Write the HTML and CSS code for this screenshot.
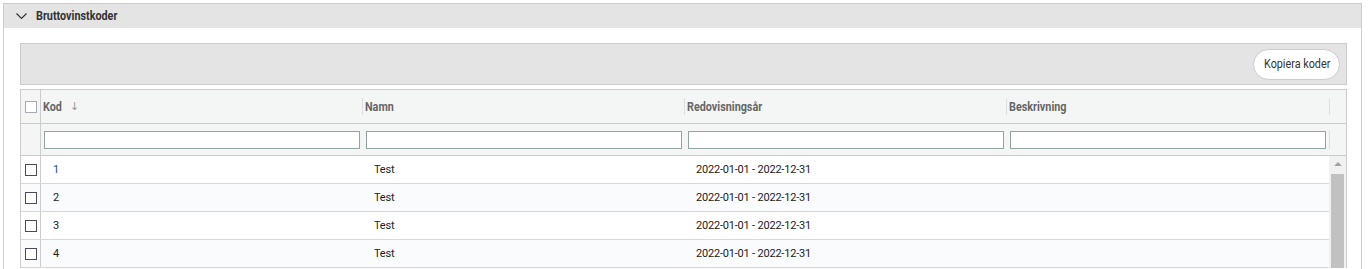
FILE: index.html
```html
<!DOCTYPE html>
<html lang="sv">
<head>
  <meta charset="UTF-8" />
  <title>Bruttovinstkoder</title>
  <link rel="stylesheet" href="styles.css">
</head>
<body>

  <div class="panel">
    <div class="panel-head">
      <svg class="chevron" width="11" height="7" viewBox="0 0 11 7"><path d="M0.5 0.5 L5.5 5.5 L10.5 0.5" fill="none" stroke="#333" stroke-width="1.2"/></svg>
      <span class="panel-title narrow">Bruttovinstkoder</span>
    </div>

    <div class="panel-body">
      <div class="toolbar">
        <button class="pill-btn"><span class="narrow">Kopiera koder</span></button>
      </div>

      <div class="grid">
        <!-- Column headers -->
        <div class="grid-head">
          <div class="cell-check"><span class="checkbox light"></span></div>
          <div class="head-cell first"><span class="narrow">Kod</span><span class="sort">&#8595;</span></div>
          <div class="head-cell"><span class="narrow">Namn</span></div>
          <div class="head-cell"><span class="narrow">Redovisningsår</span></div>
          <div class="head-cell"><span class="narrow">Beskrivning</span></div>
          <div class="head-gutter"></div>
        </div>

        <!-- Filter row -->
        <div class="grid-filter">
          <div class="cell-check"></div>
          <div class="filter-cell"><input type="text"></div>
          <div class="filter-cell"><input type="text"></div>
          <div class="filter-cell"><input type="text"></div>
          <div class="filter-cell"><input type="text"></div>
          <div class="filter-gutter"></div>
        </div>

        <!-- Body -->
        <div class="grid-body">
          <div class="rows">
            <div class="row">
              <div class="cell-check"><span class="checkbox"></span></div>
              <div class="cell code blue">1</div>
              <div class="cell">Test</div>
              <div class="cell">2022-01-01 - 2022-12-31</div>
              <div class="cell"></div>
            </div>
            <div class="row alt">
              <div class="cell-check"><span class="checkbox"></span></div>
              <div class="cell code">2</div>
              <div class="cell">Test</div>
              <div class="cell">2022-01-01 - 2022-12-31</div>
              <div class="cell"></div>
            </div>
            <div class="row">
              <div class="cell-check"><span class="checkbox"></span></div>
              <div class="cell code">3</div>
              <div class="cell">Test</div>
              <div class="cell">2022-01-01 - 2022-12-31</div>
              <div class="cell"></div>
            </div>
            <div class="row alt">
              <div class="cell-check"><span class="checkbox"></span></div>
              <div class="cell code">4</div>
              <div class="cell">Test</div>
              <div class="cell">2022-01-01 - 2022-12-31</div>
              <div class="cell"></div>
            </div>
          </div>

          <div class="scrollbar">
            <div class="scroll-up"></div>
            <div class="scroll-thumb"></div>
          </div>
        </div>
      </div>
    </div>
  </div>

</body>
</html>
```

FILE: styles.css
```css
body {
  font-family: Roboto, 'Liberation Sans', sans-serif;
  font-size: 11px;
  letter-spacing: -0.2px;
  color: #222;
  margin: 0;
  padding: 0;
  background: #fff;
  height: 269px;
  overflow: hidden;
}

/* condensed labels: the app font is a narrow grotesque */
.narrow {
  font-family: Roboto, sans-serif;
  display: inline-block;
  transform: scaleX(0.9);
  transform-origin: left center;
}

/* Outer panel */
.panel {
  margin: 3px 6px 0 3px;
  border: 1px solid #cccccc;
  border-bottom: none;
  height: 266px;
  box-sizing: border-box;
}

.panel-head {
  height: 24px;
  background-color: #e4e4e4;
  display: flex;
  align-items: center;
  padding-left: 12px;
}

.chevron {
  margin-right: 9px;
}

.panel-title {
  font-weight: bold;
  font-size: 12px;
  letter-spacing: 0;
  color: #333;
}

.panel-body {
  padding: 15px 14px 0 16px;
}

/* Toolbar */
.toolbar {
  height: 40px;
  background-color: #e4e4e4;
  border: 1px solid #cccccc;
  display: flex;
  justify-content: flex-end;
  align-items: center;
  padding-right: 6px;
}

.pill-btn {
  font-family: Roboto, sans-serif;
  font-size: 12px;
  letter-spacing: 0;
  color: #333;
  background: #fff;
  border: 1px solid #cccccc;
  border-radius: 16px;
  height: 31px;
  width: 87px;
  padding: 0 0 0 10px;
  text-align: left;
  white-space: nowrap;
  overflow: hidden;
}

/* Grid */
.grid {
  margin-top: 4px;
  border: 1px solid #cccccc;
  border-bottom: none;
}

.grid-head,
.grid-filter,
.row {
  display: grid;
  grid-template-columns: 20px 322px 322px 322px 322px;
}

.grid-head,
.grid-filter {
  grid-template-columns: 20px 322px 322px 322px 322px 1fr;
  background: #f4f6f6;
}

.grid-head {
  height: 33px;
}

.grid-filter {
  height: 31px;
  border-top: 1px solid #c8cccc;
  border-bottom: 1px solid #c8cccc;
}

.cell-check {
  border-right: 1px solid #cccccc;
  display: flex;
  align-items: center;
  justify-content: center;
}

.checkbox {
  width: 10px;
  height: 10px;
  border: 1px solid #4a4a66;
  background: #fff;
  display: block;
  margin-left: 1px;
}

.checkbox.light {
  border-color: #a8a8b0;
}

.head-cell {
  font-weight: bold;
  font-size: 12px;
  letter-spacing: 0;
  color: #666;
  display: flex;
  align-items: center;
  padding-left: 2px;
  position: relative;
}

/* short divider between column titles */
.head-cell::before {
  content: "";
  position: absolute;
  left: -1px;
  top: 8px;
  bottom: 8px;
  border-left: 1px solid #dcdfdf;
}

.head-cell.first::before {
  display: none;
}

.head-gutter {
  border-left: 1px solid #dcdfdf;
  margin: 8px 0;
}

.sort {
  font-family: 'DejaVu Sans', sans-serif;
  font-weight: normal;
  color: #999;
  margin-left: 6px;
  font-size: 11px;
}

.filter-cell {
  display: flex;
  align-items: center;
  padding: 0 3px;
}

.filter-cell input {
  width: 100%;
  height: 18px;
  box-sizing: border-box;
  border: 1px solid #93a5a3;
  background: #fff;
  margin: 0;
  padding: 0 4px;
}

.filter-gutter {
  border-left: 1px solid #dcdfdf;
  margin: 6px 0;
}

/* Body rows */
.grid-body {
  display: flex;
}

.rows {
  width: 1308px;
}

.row {
  height: 28px;
  box-sizing: border-box;
  border-bottom: 1px solid #d8d8d8;
  background: #fff;
}

.row.alt {
  background: #f9fbfd;
}

.cell {
  display: flex;
  align-items: center;
  padding-left: 11px;
  color: #222;
}

.cell.code {
  padding-left: 12px;
}

.cell.blue {
  color: #1a4f8f;
}

.scrollbar {
  width: 17px;
  background: #f1f1f1;
  display: flex;
  flex-direction: column;
  align-items: center;
}

.scroll-up {
  width: 0;
  height: 0;
  border-left: 4px solid transparent;
  border-right: 4px solid transparent;
  border-bottom: 4px solid #a3a3a3;
  margin-top: 6px;
  margin-bottom: 8px;
}

.scroll-thumb {
  width: 13px;
  flex: 1;
  background: #c1c1c1;
}
```
